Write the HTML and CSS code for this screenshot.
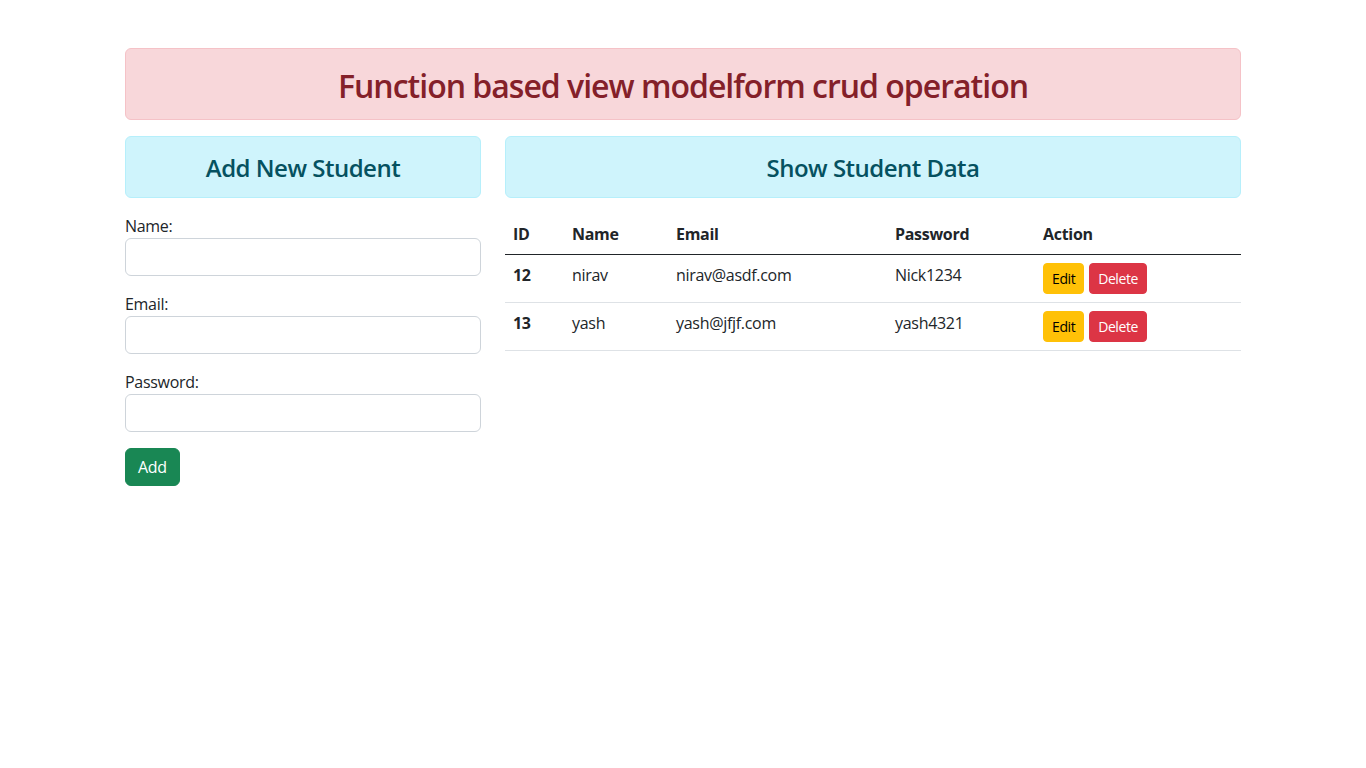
FILE: index.html
```html
<!DOCTYPE html>
<html lang="en">
<head>
<meta charset="utf-8">
<title>Function based view modelform crud operation</title>
<link rel="stylesheet" href="styles.css">
</head>
<body>
<div class="container">
  <div class="alert alert-danger">
    <h2 class="title">Function based view modelform crud operation</h2>
  </div>
  <div class="row">
    <div class="col-left">
      <div class="alert alert-info">
        <h4 class="subtitle">Add New Student</h4>
      </div>
      <form class="form">
        <div class="field">
          <label for="name">Name:</label>
          <input id="name" type="text" class="form-control">
        </div>
        <div class="field">
          <label for="email">Email:</label>
          <input id="email" type="email" class="form-control">
        </div>
        <div class="field">
          <label for="password">Password:</label>
          <input id="password" type="password" class="form-control">
        </div>
        <button type="button" class="btn btn-success">Add</button>
      </form>
    </div>
    <div class="col-right">
      <div class="alert alert-info">
        <h4 class="subtitle">Show Student Data</h4>
      </div>
      <table class="table">
        <colgroup>
          <col class="c-id"><col class="c-name"><col class="c-email"><col class="c-pass"><col class="c-act">
        </colgroup>
        <thead>
          <tr><th>ID</th><th>Name</th><th>Email</th><th>Password</th><th>Action</th></tr>
        </thead>
        <tbody>
          <tr>
            <th>12</th><td>nirav</td><td>nirav@asdf.com</td><td>Nick1234</td>
            <td><a class="btn-sm btn-warning">Edit</a> <a class="btn-sm btn-danger">Delete</a></td>
          </tr>
          <tr>
            <th>13</th><td>yash</td><td>yash@jfjf.com</td><td>yash4321</td>
            <td><a class="btn-sm btn-warning">Edit</a> <a class="btn-sm btn-danger">Delete</a></td>
          </tr>
        </tbody>
      </table>
    </div>
  </div>
</div>
</body>
</html>
```
FILE: styles.css
```css
* { box-sizing: border-box; }
body {
  margin: 0;
  font-family: "Open Sans", "Noto Sans", sans-serif;
  font-size: 16px;
  line-height: 1.5;
  color: #212529;
  background: #fff;
}
.container {
  width: 1140px;
  margin: 0 auto;
  padding: 0 12px;
}
.alert {
  border: 1px solid transparent;
  border-radius: 6px;
  padding: 16px;
  margin-bottom: 16px;
  text-align: center;
}
.container > .alert-danger { margin-top: 48px; }
.alert-danger { background: #f8d7da; border-color: #f5c2c7; color: #842029; }
.alert-info { background: #cff4fc; border-color: #b6effb; color: #055160; }
.title {
  margin: 0;
  font-size: 32px;
  font-weight: 600;
  line-height: 38px;
  letter-spacing: -1px;
  padding-top: 2px;
  margin-bottom: -2px;
}
.subtitle {
  margin: 0;
  font-size: 24px;
  font-weight: 600;
  line-height: 28px;
  letter-spacing: -0.5px;
  padding-top: 1px;
  margin-bottom: -1px;
}
.row {
  display: flex;
  gap: 24px;
}
.col-left { width: 356px; flex: none; }
.col-right { width: 736px; flex: none; }
.field { margin-bottom: 16px; }
.field label { display: block; font-size: 16px; line-height: 24px; letter-spacing: -0.3px; }
.form-control {
  display: block;
  width: 100%;
  height: 38px;
  padding: 6px 12px;
  font: inherit;
  border: 1px solid #ced4da;
  border-radius: 6px;
  background: #fff;
}
.btn {
  display: inline-block;
  font: inherit;
  line-height: 24px;
  padding: 6px 12px;
  border: 1px solid transparent;
  border-radius: 6px;
  letter-spacing: -0.3px;
}
.btn-success { background: #198754; border-color: #198754; color: #fff; }
.table {
  width: 100%;
  border-collapse: collapse;
  table-layout: fixed;
  vertical-align: top;
  margin-bottom: 16px;
  letter-spacing: -0.3px;
}
.c-id { width: 59px; }
.c-name { width: 104px; }
.c-email { width: 219px; }
.c-pass { width: 148px; }
.c-act { width: 206px; }
.table th, .table td {
  padding: 8px;
  text-align: left;
  vertical-align: top;
  border-bottom: 1px solid #dee2e6;
  line-height: 24px;
}
.table th { font-weight: 700; }
.table thead th { border-bottom: 1px solid #212529; }
.btn-sm {
  display: inline-block;
  font-size: 14px;
  line-height: 21px;
  padding: 4px 8px;
  border: 1px solid transparent;
  border-radius: 4px;
  text-decoration: none;
  letter-spacing: -0.4px;
}
.btn-warning { background: #ffc107; border-color: #ffc107; color: #000; }
.btn-danger { background: #dc3545; border-color: #dc3545; color: #fff; margin-left: 1px; }
```
